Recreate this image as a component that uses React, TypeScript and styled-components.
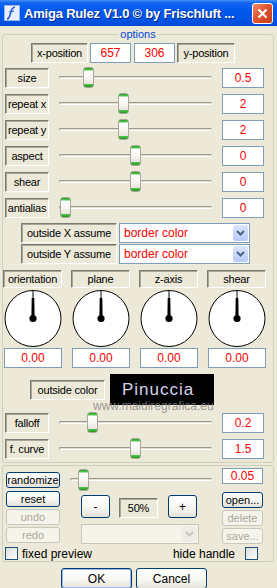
import styled, { createGlobalStyle } from 'styled-components';

const Global = createGlobalStyle`
    html, body {
        margin: 0;
        padding: 0;
        background: #ECE9D8;
    }
    body {
        font-family: "Liberation Sans", Arial, sans-serif;
        font-size: 11px;
        color: #000;
    }
`;

const Window = styled.div`
    width: 277px;
    height: 588px;
    display: flex;
    flex-direction: column;
    background: #ECE9D8;
    overflow: hidden;
`;

const TitleBar = styled.div`
    height: 26px;
    flex: none;
    display: flex;
    align-items: center;
    padding: 0 4px 0 4px;
    box-sizing: border-box;
    background: linear-gradient(to bottom, #4A92F8 0%, #1467EE 10%, #0058EE 35%, #0055E5 75%, #0048D8 100%);
`;

const Title = styled.div`
    flex: 1;
    margin-left: 4px;
    color: #fff;
    font-weight: bold;
    font-size: 13px;
    letter-spacing: -0.2px;
    white-space: nowrap;
    text-shadow: 1px 1px 0 #0A2A8A;
`;

const CloseBox = styled.div`
    width: 21px;
    height: 21px;
    box-sizing: border-box;
    border: 1px solid #fff;
    border-radius: 3px;
    background: linear-gradient(135deg, #F08A6A 0%, #E0552F 45%, #C43C1A 100%);
    display: flex;
    align-items: center;
    justify-content: center;
`;

const Group = styled.div<{ $mt: number }>`
    position: relative;
    margin: ${p => p.$mt}px 3px 0 2px;
    border: 1px solid #D0D0BF;
    border-radius: 3px;
    display: flex;
    flex-direction: column;
`;

const Legend = styled.div`
    position: absolute;
    top: -8px;
    left: 50%;
    transform: translateX(-50%);
    padding: 0 2px;
    background: #ECE9D8;
    color: #0046D5;
    font-size: 11px;
    line-height: 14px;
`;

const Row = styled.div<{ $mt: number; $pl?: number; $pr?: number; $h?: number }>`
    display: flex;
    align-items: center;
    margin-top: ${p => p.$mt}px;
    padding-left: ${p => p.$pl ?? 0}px;
    padding-right: ${p => p.$pr ?? 0}px;
    height: ${p => p.$h ?? 21}px;
    position: relative;
`;

const Label = styled.div<{ $w: number; $h?: number; $ml?: number }>`
    width: ${p => p.$w}px;
    height: ${p => p.$h ?? 20}px;
    margin-left: ${p => p.$ml ?? 0}px;
    flex: none;
    box-sizing: border-box;
    border: 1px solid;
    border-color: #7C7A72 #FFFFFF #FFFFFF #7C7A72;
    box-shadow: inset 1px 1px 0 #A8A697;
    display: flex;
    align-items: center;
    justify-content: center;
    white-space: nowrap;
    letter-spacing: -0.2px;
`;

const Field = styled.div<{ $w: number; $h?: number; $ml?: number }>`
    width: ${p => p.$w}px;
    height: ${p => p.$h ?? 20}px;
    margin-left: ${p => p.$ml ?? 0}px;
    flex: none;
    box-sizing: border-box;
    background: #fff;
    border: 1px solid #7F9DB9;
    color: #FF0000;
    font-size: 12px;
    display: flex;
    align-items: center;
    justify-content: center;
`;

const SliderBox = styled.div<{ $h?: number }>`
    flex: 1;
    height: ${p => p.$h ?? 21}px;
    padding: 0 10px;
    display: flex;
`;

const Track = styled.div`
    position: relative;
    flex: 1;
    &::before {
        content: '';
        position: absolute;
        left: 0;
        right: 0;
        top: 50%;
        height: 3px;
        margin-top: -2px;
        box-sizing: border-box;
        border-radius: 2px;
        border-top: 1px solid #9D9B8E;
        border-left: 1px solid #9D9B8E;
        border-bottom: 1px solid #FFFFFF;
        background: #E2DFD0;
    }
`;

const Thumb = styled.div<{ $pos: number }>`
    position: absolute;
    top: 0;
    bottom: 0;
    width: 11px;
    left: calc((100% - 11px) * ${p => p.$pos});
    box-sizing: border-box;
    border: 1px solid #A9A899;
    border-radius: 3px;
    background: linear-gradient(to bottom,
        #21A121 0px, #57C557 2px, #FFFFFF 3px, #F6F5F0 55%,
        #E6E4DA calc(100% - 3px), #57C557 calc(100% - 3px), #1F9A1F 100%);
`;

const Slider = ({ pos, h }: { pos: number; h?: number }) => (
    <SliderBox $h={h}>
        <Track>
            <Thumb $pos={pos} />
        </Track>
    </SliderBox>
);

const Select = styled.div<{ $w: number; $off?: boolean }>`
    width: ${p => p.$w}px;
    height: 20px;
    margin-left: 2px;
    flex: none;
    box-sizing: border-box;
    border: 1px solid ${p => (p.$off ? '#C9C7BA' : '#7F9DB9')};
    background: ${p => (p.$off ? '#F5F4EA' : '#fff')};
    color: #FF0000;
    font-size: 12px;
    display: flex;
    align-items: center;
    padding-left: 4px;
`;

const DropBtn = styled.div<{ $off?: boolean }>`
    margin-left: auto;
    margin-right: 1px;
    width: 15px;
    height: 16px;
    border-radius: 2px;
    background: ${p => (p.$off ? '#EEEDE5' : 'linear-gradient(to bottom, #DCE6FD, #B6CBF8)')};
    display: flex;
    align-items: center;
    justify-content: center;
`;

const Chevron = ({ c }: { c: string }) => (
    <svg width="9" height="6" viewBox="0 0 9 6">
        <path d="M1 1 L4.5 4.5 L8 1" fill="none" stroke={c} strokeWidth="2" />
    </svg>
);

const DialGrid = styled.div`
    margin-top: 6px;
    display: grid;
    grid-template-columns: repeat(4, 59px);
    column-gap: 9px;
    padding-left: 0;
`;

const DialCol = styled.div`
    display: flex;
    flex-direction: column;
    align-items: flex-start;
`;

const DialSvg = styled.svg`
    display: block;
    margin-top: 2px;
`;

const Dial = () => (
    <DialSvg width="60" height="58" viewBox="0 0 60 58">
        <circle cx="30" cy="28.5" r="28" fill="#fff" stroke="#000" />
        <line x1="30" y1="0.5" x2="30" y2="28" stroke="#000" strokeWidth="1" />
        <path d="M28.7 8 L31.3 8 L31.6 26 L28.4 26 Z" fill="#000" />
        <circle cx="30" cy="28.5" r="3.6" fill="#000" />
    </DialSvg>
);

const Badge = styled.div`
    width: 104px;
    height: 31px;
    margin-left: 5px;
    background: #000;
    color: #D6D4EE;
    font-family: "Liberation Sans", Arial, sans-serif;
    font-size: 17px;
    letter-spacing: 1px;
    box-sizing: border-box;
    padding-left: 12px;
    display: flex;
    align-items: center;
`;

const Watermark = styled.div`
    position: absolute;
    left: 90px;
    top: 25px;
    color: rgba(130, 130, 130, 0.8);
    font-size: 12px;
    white-space: nowrap;
`;

const Btn = styled.button<{ $w: number; $h?: number; $def?: boolean }>`
    width: ${p => p.$w}px;
    height: ${p => p.$h ?? 16}px;
    flex: none;
    box-sizing: border-box;
    padding: 0;
    margin: 0;
    font-family: inherit;
    font-size: ${p => (p.$h && p.$h > 18 ? 12 : 11)}px;
    color: #000;
    border: 1px solid #003C74;
    border-radius: 3px;
    background: linear-gradient(to bottom, #FFFFFF 0%, #F7F6F2 55%, #E4E2D8 100%);
    box-shadow: ${p => (p.$def ? 'inset 0 0 0 1px #9CB8EC' : 'none')};
    line-height: 1;
    &:disabled {
        color: #ACA899;
        border-color: #C9C7BA;
        background: #F5F4EA;
    }
`;

const ToolArea = styled.div`
    display: flex;
    align-items: flex-start;
    padding: 0 10px 0 3px;
    height: 53px;
`;

const Stack = styled.div<{ $w: number; $mt: number; $ml?: number; $gap: number }>`
    width: ${p => p.$w}px;
    margin-top: ${p => p.$mt}px;
    margin-left: ${p => p.$ml ?? 0}px;
    display: flex;
    flex-direction: column;
    gap: ${p => p.$gap}px;
`;

const ZoomRow = styled.div`
    display: flex;
    align-items: flex-end;
    height: 23px;
    gap: 9px;
`;

const CheckRow = styled.div`
    display: flex;
    align-items: center;
    margin-top: 3px;
    height: 13px;
    padding: 0 15px 1px 2px;
`;

const Check = styled.span<{ $ml?: number }>`
    width: 13px;
    height: 13px;
    flex: none;
    box-sizing: border-box;
    margin-left: ${p => p.$ml ?? 0}px;
    border: 1px solid #1C5180;
    background: linear-gradient(135deg, #DCDCD7, #FFFFFF);
`;

const CheckText = styled.span<{ $ml?: number }>`
    margin-left: ${p => p.$ml ?? 0}px;
    font-size: 12px;
    white-space: nowrap;
`;

const ButtonBar = styled.div`
    display: flex;
    gap: 4px;
    margin-top: 6px;
    padding-left: 61px;
`;

const sliders1 = [
    { name: 'size', pos: 0.168, value: '0.5' },
    { name: 'repeat x', pos: 0.413, value: '2' },
    { name: 'repeat y', pos: 0.413, value: '2' },
    { name: 'aspect', pos: 0.5, value: '0' },
    { name: 'shear', pos: 0.5, value: '0' },
    { name: 'antialias', pos: 0.005, value: '0' },
];

const dials = ['orientation', 'plane', 'z-axis', 'shear'];

const App = () => {
    return (
        <>
            <Global />
            <Window>
                <TitleBar>
                    <svg width="16" height="16" viewBox="0 0 16 16">
                        <rect x="0.5" y="0.5" width="15" height="15" fill="#E8F0FF" stroke="#9BB5E8" />
                        <path d="M11 2 C7 3 7 7 6 10 C5.5 12 4.5 14 3 14" fill="none" stroke="#2A5BD7" strokeWidth="1.6" />
                        <path d="M5 7 L10 6" stroke="#2A5BD7" strokeWidth="1.2" />
                    </svg>
                    <Title>Amiga Rulez V1.0 © by Frischluft ...</Title>
                    <CloseBox>
                        <svg width="11" height="11" viewBox="0 0 11 11">
                            <path d="M1.5 1.5 L9.5 9.5 M9.5 1.5 L1.5 9.5" stroke="#fff" strokeWidth="2.2" />
                        </svg>
                    </CloseBox>
                </TitleBar>

                <Group $mt={8}>
                    <Legend>options</Legend>
                    <Row $mt={8} $pl={28} $h={20}>
                        <Label $w={57}>x-position</Label>
                        <Field $w={41} $ml={2}>657</Field>
                        <Field $w={41} $ml={3}>306</Field>
                        <Label $w={58} $ml={2}>y-position</Label>
                    </Row>

                    {sliders1.map((s, i) => (
                        <Row key={s.name} $mt={i === 0 ? 4 : 5} $pl={2} $pr={9}>
                            <Label $w={44}>{s.name}</Label>
                            <Slider pos={s.pos} />
                            <Field $w={42}>{s.value}</Field>
                        </Row>
                    ))}

                    <Row $mt={5} $pl={18} $h={20}>
                        <Label $w={96}>outside X assume</Label>
                        <Select $w={131}>
                            border color
                            <DropBtn><Chevron c="#4D6185" /></DropBtn>
                        </Select>
                    </Row>
                    <Row $mt={1} $pl={18} $h={20}>
                        <Label $w={96}>outside Y assume</Label>
                        <Select $w={131}>
                            border color
                            <DropBtn><Chevron c="#4D6185" /></DropBtn>
                        </Select>
                    </Row>

                    <DialGrid>
                        {dials.map(d => (
                            <DialCol key={d}>
                                <Label $w={59} $h={18}>{d}</Label>
                                <Dial />
                                <Field $w={58} $ml={1}>0.00</Field>
                            </DialCol>
                        ))}
                    </DialGrid>

                    <Row $mt={6} $pl={27} $h={31}>
                        <Label $w={75}>outside color</Label>
                        <Badge>Pinuccia</Badge>
                        <Watermark>www.maidiregrafica.eu</Watermark>
                    </Row>

                    <Row $mt={7} $pl={2} $pr={9}>
                        <Label $w={44}>falloff</Label>
                        <Slider pos={0.2} />
                        <Field $w={42}>0.2</Field>
                    </Row>
                    <Row $mt={5} $pl={2} $pr={9}>
                        <Label $w={44}>f. curve</Label>
                        <Slider pos={0.5} />
                        <Field $w={42}>1.5</Field>
                    </Row>
                    <Row $mt={3} $h={0} />
                </Group>

                <Group $mt={2}>
                    <Row $mt={2} $pl={3} $pr={10} $h={23}>
                        <Btn $w={54} style={{ alignSelf: 'flex-start', marginTop: 4 }}>randomize</Btn>
                        <Slider pos={0.06} h={22} />
                        <Field $w={41} $h={16} style={{ alignSelf: 'flex-start' }}>0.05</Field>
                    </Row>
                    <ToolArea>
                        <Stack $w={54} $mt={0} $gap={2}>
                            <Btn $w={54}>reset</Btn>
                            <Btn $w={54} disabled>undo</Btn>
                            <Btn $w={54} disabled>redo</Btn>
                        </Stack>
                        <Stack $w={118} $mt={4} $ml={21} $gap={6}>
                            <ZoomRow>
                                <Btn $w={29} $h={23}>-</Btn>
                                <Label $w={39}>50%</Label>
                                <Btn $w={29} $h={23} style={{ marginLeft: 1 }}>+</Btn>
                            </ZoomRow>
                            <Select $w={118} $off style={{ marginLeft: 0 }}>
                                <DropBtn $off><Chevron c="#C9C7BA" /></DropBtn>
                            </Select>
                        </Stack>
                        <Stack $w={41} $mt={1} $ml={23} $gap={2}>
                            <Btn $w={41}>open...</Btn>
                            <Btn $w={41} disabled>delete</Btn>
                            <Btn $w={41} disabled>save...</Btn>
                        </Stack>
                    </ToolArea>
                    <CheckRow>
                        <Check />
                        <CheckText $ml={4}>fixed preview</CheckText>
                        <CheckText style={{ marginLeft: 'auto' }}>hide handle</CheckText>
                        <Check $ml={10} />
                    </CheckRow>
                </Group>

                <ButtonBar>
                    <Btn $w={71} $h={21} $def>OK</Btn>
                    <Btn $w={71} $h={21}>Cancel</Btn>
                </ButtonBar>
            </Window>
        </>
    );
};

export default App;
